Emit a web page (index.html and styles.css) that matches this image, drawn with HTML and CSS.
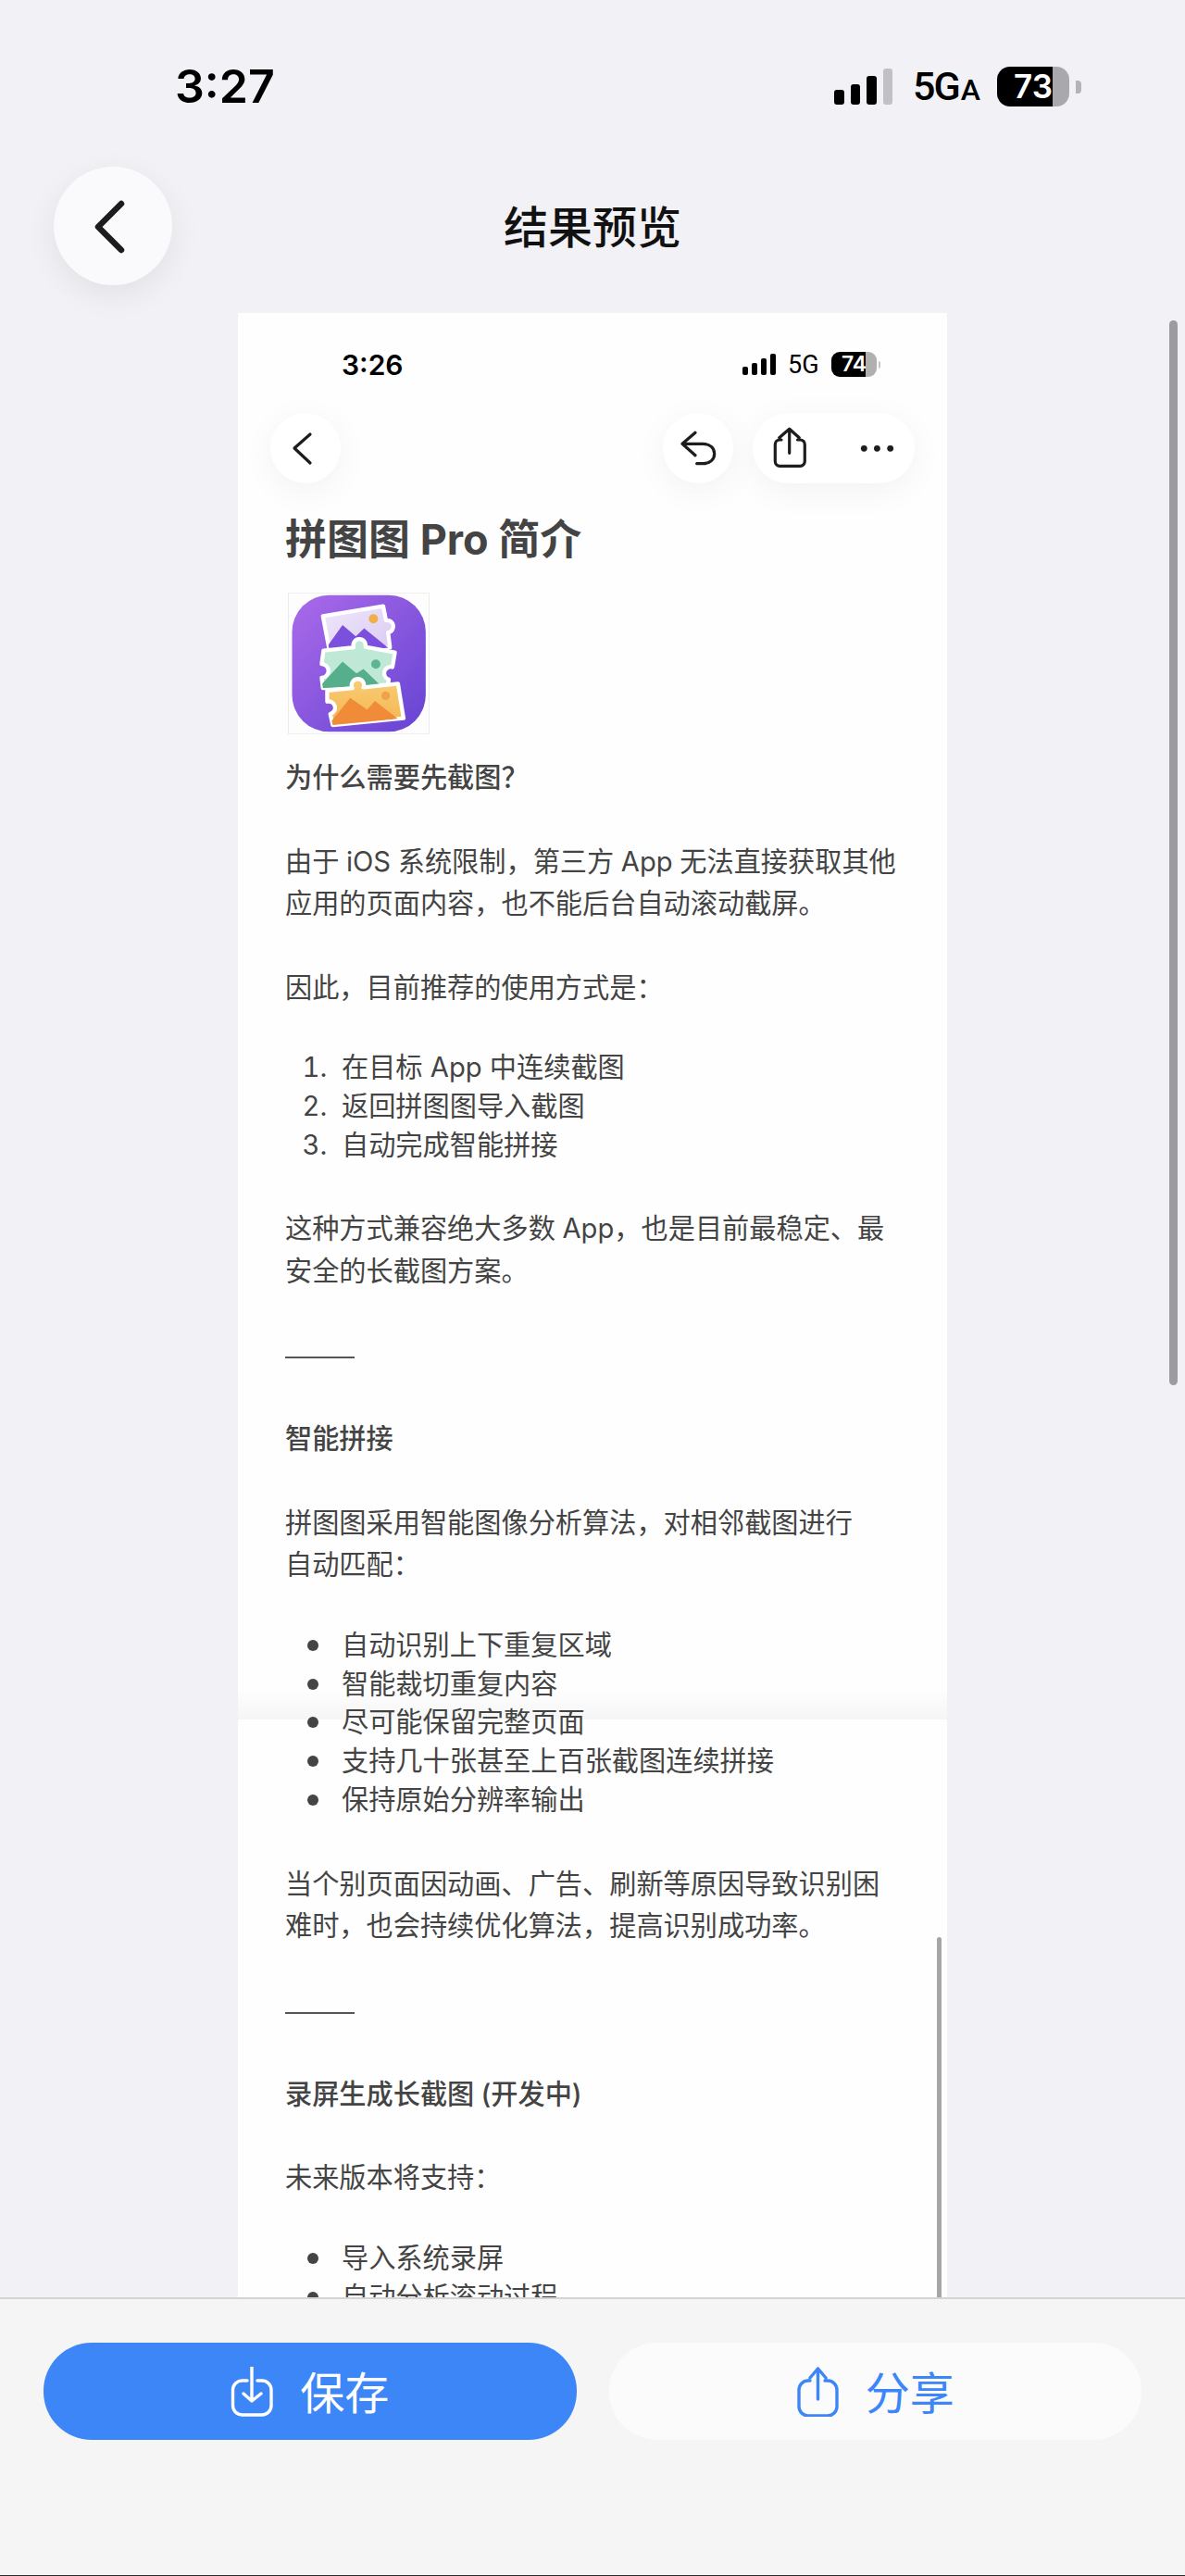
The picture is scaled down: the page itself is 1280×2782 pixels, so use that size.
FILE: index.html
```html
<!DOCTYPE html>
<html lang="zh-CN">
<head>
<meta charset="utf-8">
<title>结果预览</title>
<link rel="stylesheet" href="styles.css">
</head>
<body>
<div class="app">
  <div class="status">
    <span class="time">3:27</span>
    <div class="status-right">
      <div class="signal">
        <i class="bar b1"></i><i class="bar b2"></i><i class="bar b3"></i><i class="bar b4 off"></i>
      </div>
      <span class="net">5G<small>A</small></span>
      <div class="battery-wrap">
        <span class="battery">73</span>
        <i class="nub"></i>
      </div>
    </div>
  </div>

  <header class="header">
    <button class="round-btn">
      <svg width="128" height="128" viewBox="0 0 128 128"><path d="M73 40 L48 65 L73 90" class="chev"/></svg>
    </button>
    <h1 class="page-title">结果预览</h1>
  </header>

  <main class="preview">
    <div class="pv-status">
      <span class="pv-time">3:26</span>
      <div class="pv-right">
        <div class="pv-signal">
          <i class="pv-bar p1"></i><i class="pv-bar p2"></i><i class="pv-bar p3"></i><i class="pv-bar p4"></i>
        </div>
        <span class="pv-net">5G</span>
        <div class="pv-batt-wrap"><span class="pv-batt">74</span><i class="pv-nub"></i></div>
      </div>
    </div>

    <nav class="pv-nav">
      <button class="pv-btn">
        <svg width="76" height="76" viewBox="0 0 76 76"><path class="pv-stroke" d="M43 23 L26 38 L43 54"/></svg>
      </button>
      <div class="pv-actions">
        <button class="pv-btn">
          <svg width="76" height="76" viewBox="0 0 76 76"><path class="pv-stroke" d="M35 21.3 L21 33.3 L35 45.7 M21 33.3 H43.3 C51 33.3 55.7 38 55.7 44 C55.7 50 51 54.7 43.3 54.7 H36.7"/></svg>
        </button>
        <div class="pv-pill">
          <svg width="175" height="76" viewBox="0 0 175 76">
            <path class="pv-stroke" d="M31 29 H29.3 A5 5 0 0 0 24.3 34 V52.3 A5 5 0 0 0 29.3 57.3 H51.3 A5 5 0 0 0 56.3 52.3 V34 A5 5 0 0 0 51.3 29 H48.5 M39.7 17.3 V43.3 M28.7 26.7 L39.7 17.3 L50.3 26.7"/>
            <circle cx="120.3" cy="38.3" r="3.4" class="pv-dot"/><circle cx="134.4" cy="38.3" r="3.4" class="pv-dot"/><circle cx="148.7" cy="38.3" r="3.4" class="pv-dot"/>
          </svg>
        </div>
      </div>
    </nav>

    <article class="doc">
      <h2 class="doc-title">拼图图 Pro 简介</h2>
      <div class="app-icon">
        <svg width="153" height="153" viewBox="63 30 459 460">
          <defs>
            <linearGradient id="ig" x1="0" y1="0" x2="1" y2="1"><stop offset="0" stop-color="#ab6aea"/><stop offset="1" stop-color="#6544d3"/></linearGradient>
            <linearGradient id="lav" x1="0" y1="0" x2="1" y2="1"><stop offset="0" stop-color="#efe8fa"/><stop offset="1" stop-color="#d9c9f4"/></linearGradient>
            <linearGradient id="ora" x1="0" y1="0" x2="0" y2="1"><stop offset="0" stop-color="#f8cd72"/><stop offset="1" stop-color="#f4b455"/></linearGradient>
            <clipPath id="c1"><path d="M176 106 L372 74 L381 120 A20 20 0 1 1 388 160 L394 208 L200 232 Z"/></clipPath>
            <clipPath id="c2"><path d="M178 218 L276 208 A20 20 0 1 1 314 206 L410 224 L402 272 A18 18 0 1 0 390 312 L388 330 L176 340 L172 306 A18 18 0 1 0 172 262 Z"/></clipPath>
            <clipPath id="c3"><path d="M190 348 L272 340 A20 20 0 1 1 308 338 L420 326 L438 438 L208 460 L200 424 A18 18 0 1 0 190 384 Z"/></clipPath>
          </defs>
          <rect x="64" y="31" width="457" height="458" fill="#fdfdfd" stroke="#ececec" stroke-width="3"/>
          <rect x="76" y="38" width="434" height="444" rx="120" fill="url(#ig)"/>
          <path d="M176 106 L372 74 L381 120 A20 20 0 1 1 388 160 L394 208 L200 232 Z" fill="url(#lav)" stroke="#fff" stroke-width="13" stroke-linejoin="round"/>
          <g clip-path="url(#c1)"><path d="M190 205 L240 135 L283 172 L310 146 L395 215 L200 240 Z" fill="#7b50dc"/><circle cx="340" cy="115" r="15" fill="#f1b045"/></g>
          <path d="M178 218 L276 208 A20 20 0 1 1 314 206 L410 224 L402 272 A18 18 0 1 0 390 312 L388 330 L176 340 L172 306 A18 18 0 1 0 172 262 Z" fill="#bfe9d6" stroke="#fff" stroke-width="13" stroke-linejoin="round"/>
          <g clip-path="url(#c2)"><path d="M170 330 L240 254 L285 292 L308 278 L362 330 L175 345 Z" fill="#55ae8c"/><circle cx="348" cy="262" r="15" fill="#5bb596"/></g>
          <path d="M190 348 L272 340 A20 20 0 1 1 308 338 L420 326 L438 438 L208 460 L200 424 A18 18 0 1 0 190 384 Z" fill="url(#ora)" stroke="#fff" stroke-width="13" stroke-linejoin="round"/>
          <g clip-path="url(#c3)"><path d="M195 458 L265 372 L320 410 L345 382 L420 440 L205 465 Z" fill="#f08c38"/><circle cx="380" cy="365" r="14" fill="#f0a248"/></g>
        </svg>
      </div>

      <p class="bold lead">为什么需要先截图？</p>
      <p>由于 iOS 系统限制，第三方 App 无法直接获取其他<br>应用的页面内容，也不能后台自动滚动截屏。</p>
      <p>因此，目前推荐的使用方式是：</p>
      <ol class="list numbers">
        <li>在目标 App 中连续截图</li>
        <li>返回拼图图导入截图</li>
        <li>自动完成智能拼接</li>
      </ol>
      <p>这种方式兼容绝大多数 App，也是目前最稳定、最<br>安全的长截图方案。</p>
      <hr class="rule">
      <p class="bold">智能拼接</p>
      <p>拼图图采用智能图像分析算法，对相邻截图进行<br>自动匹配：</p>
      <ul class="list bullets">
        <li>自动识别上下重复区域</li>
        <li>智能裁切重复内容</li>
        <li>尽可能保留完整页面</li>
        <li>支持几十张甚至上百张截图连续拼接</li>
        <li>保持原始分辨率输出</li>
      </ul>
      <p>当个别页面因动画、广告、刷新等原因导致识别困<br>难时，也会持续优化算法，提高识别成功率。</p>
      <hr class="rule">
      <p class="bold">录屏生成长截图 (开发中)</p>
      <p>未来版本将支持：</p>
      <ul class="list bullets">
        <li>导入系统录屏</li>
        <li>自动分析滚动过程</li>
      </ul>
    </article>

    <div class="seam"></div>
    <div class="pv-scroll"></div>
  </main>

  <div class="page-scroll"></div>

  <footer class="bottom">
    <button class="action primary">
      <svg width="46" height="54" viewBox="0 0 46 54"><path class="ic" d="M18 15 H12.5 A10 10 0 0 0 2.5 25 V42 A10 10 0 0 0 12.5 52 H34 A10 10 0 0 0 44 42 V25 A10 10 0 0 0 34 15 H29 M23 1 V37 M14 29 L23 37 L33 29"/></svg>
      <span>保存</span>
    </button>
    <button class="action secondary">
      <svg width="46" height="54" viewBox="0 0 46 54"><path class="ic" d="M15 15 H13 A10 10 0 0 0 3 25 V43 A10 10 0 0 0 13 53 H34 A10 10 0 0 0 44 43 V25 A10 10 0 0 0 34 15 H31 M23.5 2 V35 M15 12 L23.5 2 L32 12"/></svg>
      <span>分享</span>
    </button>
  </footer>
</div>
</body>
</html>
```

FILE: styles.css
```css
* { box-sizing: border-box; margin: 0; padding: 0; }
html, body { background: #f2f1f6; }
body { font-family: Inter, "Noto Sans CJK SC", sans-serif; }
button { border: 0; font: inherit; background: none; }

.app {
  position: relative;
  width: 1280px;
  height: 2782px;
  display: flex;
  flex-direction: column;
  overflow: hidden;
  background: #f2f1f6;
}

/* outer status bar */
.status {
  display: flex;
  justify-content: space-between;
  align-items: center;
  height: 43px;
  margin-top: 72px;
  padding: 0 112px 0 189px;
  color: #000;
}
.time { font-size: 50px; font-weight: 600; line-height: 43px; }
.status-right { display: flex; align-items: center; gap: 22px; }
.signal { display: flex; align-items: flex-end; gap: 7px; height: 39px; }
.bar { display: block; width: 10.5px; background: #000; border-radius: 3px; }
.b1 { height: 16px; }
.b2 { height: 22px; }
.b3 { height: 31px; }
.b4 { height: 39px; }
.bar.off { background: #c0c0c5; }
.net { font-family: Roboto, sans-serif; font-size: 43px; font-weight: 500; letter-spacing: -2px; line-height: 43px; width: 69px; white-space: nowrap; padding-top: 3px; }
.net small { font-size: 32px; letter-spacing: 0; margin-left: 2px; }
.battery-wrap { display: flex; align-items: center; gap: 7px; }
.battery {
  width: 78px;
  height: 43px;
  border-radius: 14px;
  background: linear-gradient(to right, #000 77%, #a9a8ad 77%);
  color: #fff;
  font-size: 35px;
  font-weight: 600;
  line-height: 43px;
  text-align: center;
}
.nub { display: block; width: 6px; height: 14px; background: #b4b3b8; border-radius: 0 4px 4px 0; }

/* header */
.header {
  display: grid;
  grid-template-columns: 1fr auto 1fr;
  align-items: center;
  height: 128px;
  margin-top: 65px;
  padding: 0 58px;
}
.round-btn {
  justify-self: start;
  width: 128px;
  height: 128px;
  border-radius: 50%;
  background: #fafafc;
  box-shadow: 0 10px 34px rgba(0, 0, 0, .07);
}
.round-btn svg { display: block; }
.chev { fill: none; stroke: #1c1c1e; stroke-width: 6.5; stroke-linecap: round; stroke-linejoin: round; }
.page-title { font-size: 48px; font-weight: 500; color: #111; line-height: 60px; padding-top: 3px; }

/* preview */
.preview {
  position: relative;
  flex: 1;
  min-height: 0;
  margin: 30px 0 0 257px;
  width: 766px;
  background: #fefefe;
  overflow: hidden;
}
.pv-status {
  display: flex;
  justify-content: space-between;
  align-items: center;
  height: 27px;
  margin-top: 42px;
  padding: 0 72px 0 112px;
  color: #000;
}
.pv-time { font-size: 30px; font-weight: 600; line-height: 27px; padding-top: 2px; }
.pv-right { display: flex; align-items: center; gap: 13px; }
.pv-signal { display: flex; align-items: flex-end; gap: 4px; height: 23px; }
.pv-bar { display: block; width: 6px; background: #000; border-radius: 2px; }
.p1 { height: 9px; }
.p2 { height: 13px; }
.p3 { height: 18px; }
.p4 { height: 23px; }
.pv-net { font-family: Roboto, sans-serif; font-size: 27px; line-height: 27px; width: 34px; padding-top: 2px; }
.pv-batt-wrap { display: flex; align-items: center; gap: 2px; }
.pv-batt {
  width: 49px;
  height: 27px;
  border-radius: 9px;
  background: linear-gradient(to right, #000 76%, #b0b0b0 76%);
  color: #fff;
  font-size: 23px;
  font-weight: 600;
  line-height: 27px;
  text-align: center;
}
.pv-nub { display: block; width: 2px; height: 8px; background: #c4c4c4; border-radius: 0 2px 2px 0; }

.pv-nav {
  display: flex;
  justify-content: space-between;
  margin-top: 39px;
  padding: 0 35px;
  height: 76px;
}
.pv-actions { display: flex; gap: 21px; }
.pv-btn, .pv-pill {
  display: block;
  height: 76px;
  background: #fff;
  border-radius: 38px;
  box-shadow: 0 8px 36px rgba(0, 0, 0, .05);
}
.pv-btn { width: 76px; }
.pv-pill { width: 175px; }
.pv-btn svg, .pv-pill svg { display: block; }
.pv-stroke { fill: none; stroke: #1d1d1f; stroke-width: 3.2; stroke-linecap: round; stroke-linejoin: round; }
.pv-dot { fill: #1d1d1f; }

/* doc */
.doc {
  padding: 31px 0 0 51px;
  color: #444;
  font-size: 29.2px;
  line-height: 45.5px;
  white-space: nowrap;
}
.doc-title { font-size: 45px; line-height: 60px; font-weight: 700; color: #444; }
.app-icon { margin-top: 27px; width: 153px; height: 153px; margin-left: 3px; }
.app-icon svg { display: block; }
.doc p { margin-bottom: 45px; word-spacing: -.6px; }
.doc p.lead { margin-top: 24px; }
.doc .bold { font-weight: 500; }
.list { margin: -2px 0 47px; padding-left: 61px; line-height: 41.8px; }
.numbers li::marker { content: counter(list-item) ".\00a0\00a0"; }
.bullets { list-style: none; }
.bullets li { display: flex; align-items: center; }
.bullets li::before {
  content: "";
  flex: none;
  width: 12px;
  height: 12px;
  border-radius: 50%;
  background: #444;
  margin-left: -37px;
  margin-right: 25px;
}
.rule { border: 0; height: 2px; width: 75px; background: #555; margin: 70px 0 64px; }

.seam {
  position: absolute;
  left: 0;
  right: 0;
  top: 1487px;
  height: 32px;
  background: linear-gradient(to bottom, rgba(0, 0, 0, 0), rgba(0, 0, 0, .035));
  pointer-events: none;
}
.pv-scroll {
  position: absolute;
  left: 755px;
  top: 1754px;
  bottom: 0;
  width: 5px;
  background: #a6a6a6;
  border-radius: 3px 3px 0 0;
}
.page-scroll {
  position: absolute;
  left: 1263px;
  top: 346px;
  width: 9px;
  height: 1150px;
  background: #9c9ba0;
  border-radius: 5px;
}

/* bottom */
.bottom {
  flex: none;
  height: 301px;
  border-top: 2px solid #d4d4d6;
  border-bottom: 1px solid #2a2a2a;
  background: #f5f5f6;
  padding: 47px 47px 0;
  display: grid;
  grid-template-columns: 1fr 1fr;
  column-gap: 35px;
  align-items: start;
}
.action {
  display: flex;
  align-items: center;
  justify-content: center;
  gap: 29px;
  height: 105px;
  border-radius: 52px;
  font-size: 48px;
  line-height: 60px;
}
.action svg { display: block; }
.action span { padding-top: 5px; }
.ic { fill: none; stroke: currentColor; stroke-width: 3.4; stroke-linecap: round; stroke-linejoin: round; }
.primary { background: #3d86f7; color: #fff; }
.secondary { background: #fbfbfc; color: #3d86f7; }
```
